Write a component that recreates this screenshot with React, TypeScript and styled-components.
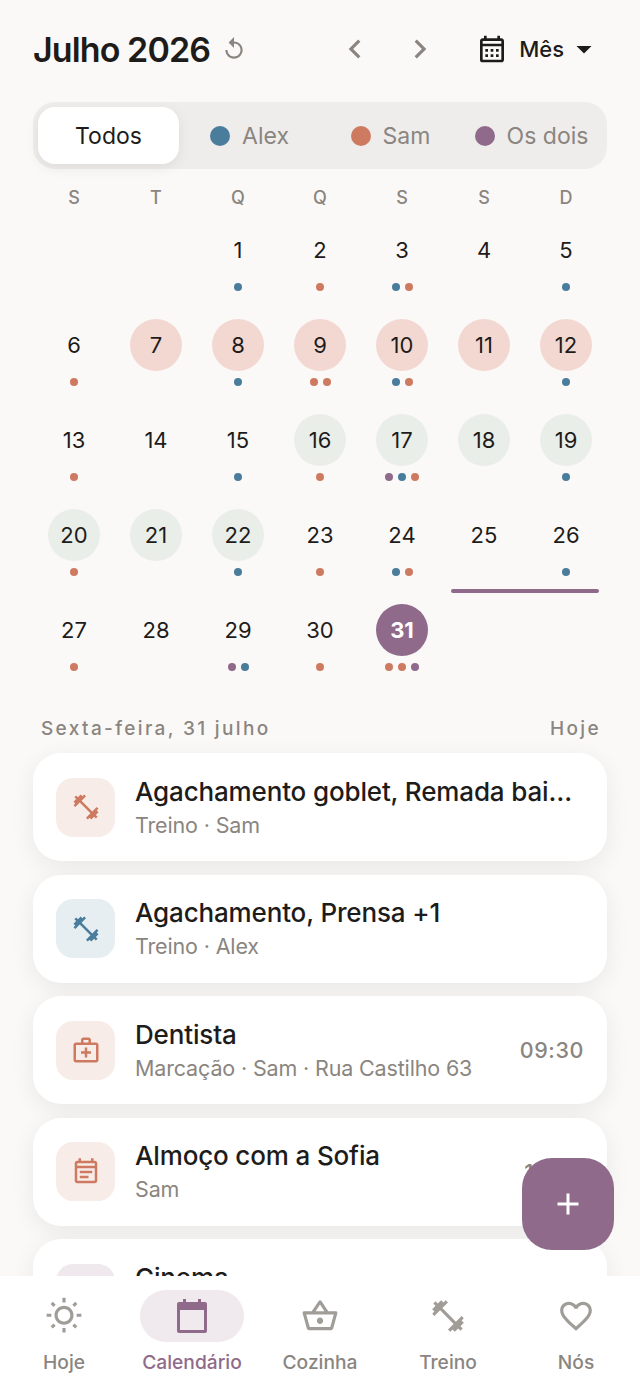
import styled, { createGlobalStyle } from "styled-components";
import type { ReactNode } from "react";
import {
  MdAdd,
  MdArrowDropDown,
  MdChevronLeft,
  MdChevronRight,
  MdFavoriteBorder,
  MdFitnessCenter,
  MdOutlineCalendarMonth,
  MdOutlineEventNote,
  MdOutlineMedicalServices,
  MdOutlineShoppingBasket,
  MdOutlineWbSunny,
  MdReplay,
} from "react-icons/md";

const ink = "#1e1c1a";
const muted = "#8a8580";
const blue = "#4a7c9c";
const coral = "#cd7a60";
const purple = "#8f6a8a";

type Who = "a" | "s" | "b";
type Tint = "none" | "pink" | "green" | "today";

const whoColor: Record<Who, string> = { a: blue, s: coral, b: purple };
const tintColor: Record<Tint, string> = {
  none: "transparent",
  pink: "#f3d8d2",
  green: "#e9eee9",
  today: purple,
};

const days: { n: number; dots: Who[]; tint?: Tint }[] = [
  { n: 1, dots: ["a"] },
  { n: 2, dots: ["s"] },
  { n: 3, dots: ["a", "s"] },
  { n: 4, dots: [] },
  { n: 5, dots: ["a"] },
  { n: 6, dots: ["s"] },
  { n: 7, dots: [], tint: "pink" },
  { n: 8, dots: ["a"], tint: "pink" },
  { n: 9, dots: ["s", "s"], tint: "pink" },
  { n: 10, dots: ["a", "s"], tint: "pink" },
  { n: 11, dots: [], tint: "pink" },
  { n: 12, dots: ["a"], tint: "pink" },
  { n: 13, dots: ["s"] },
  { n: 14, dots: [] },
  { n: 15, dots: ["a"] },
  { n: 16, dots: ["s"], tint: "green" },
  { n: 17, dots: ["b", "a", "s"], tint: "green" },
  { n: 18, dots: [], tint: "green" },
  { n: 19, dots: ["a"], tint: "green" },
  { n: 20, dots: ["s"], tint: "green" },
  { n: 21, dots: [], tint: "green" },
  { n: 22, dots: ["a"], tint: "green" },
  { n: 23, dots: ["s"] },
  { n: 24, dots: ["a", "s"] },
  { n: 25, dots: [] },
  { n: 26, dots: ["a"] },
  { n: 27, dots: ["s"] },
  { n: 28, dots: [] },
  { n: 29, dots: ["b", "a"] },
  { n: 30, dots: ["s"] },
  { n: 31, dots: ["s", "s", "b"], tint: "today" },
];

const events: { icon: ReactNode; who: Who; title: string; sub: string; time?: string }[] = [
  { icon: <MdFitnessCenter />, who: "s", title: "Agachamento goblet, Remada bai…", sub: "Treino · Sam" },
  { icon: <MdFitnessCenter />, who: "a", title: "Agachamento, Prensa +1", sub: "Treino · Alex" },
  { icon: <MdOutlineMedicalServices />, who: "s", title: "Dentista", sub: "Marcação · Sam · Rua Castilho 63", time: "09:30" },
  { icon: <MdOutlineEventNote />, who: "s", title: "Almoço com a Sofia", sub: "Sam", time: "13:00" },
  { icon: <MdOutlineEventNote />, who: "b", title: "Cinema", sub: "Os dois" },
];

export default function App() {
  return (
    <>
      <GlobalStyle />
      <Screen>
        <Header>
          <Title>Julho 2026</Title>
          <ResetIcon>
            <MdReplay />
          </ResetIcon>
          <Arrows>
            <MdChevronLeft />
            <MdChevronRight />
          </Arrows>
          <ViewPicker>
            <MdOutlineCalendarMonth />
            <span>Mês</span>
            <MdArrowDropDown />
          </ViewPicker>
        </Header>

        <Segments>
          <Segment $active>Todos</Segment>
          <Segment>
            <SegmentDot $who="a" />
            Alex
          </Segment>
          <Segment>
            <SegmentDot $who="s" />
            Sam
          </Segment>
          <Segment>
            <SegmentDot $who="b" />
            Os dois
          </Segment>
        </Segments>

        <Weekdays>
          {["S", "T", "Q", "Q", "S", "S", "D"].map((d, i) => (
            <Weekday key={i}>{d}</Weekday>
          ))}
        </Weekdays>

        <Month>
          {days.map((d) => (
            <Day key={d.n} $col={((d.n + 1) % 7) + 1} $row={Math.floor((d.n + 1) / 7) + 1}>
              <DayNumber $tint={d.tint ?? "none"}>{d.n}</DayNumber>
              <Dots>
                {d.dots.map((w, i) => (
                  <Dot key={i} $who={w} />
                ))}
              </Dots>
            </Day>
          ))}
          <RangeBar />
        </Month>

        <AgendaHead>
          <span>Sexta-feira, 31 julho</span>
          <span>Hoje</span>
        </AgendaHead>

        <Agenda>
          {events.map((e) => (
            <Card key={e.title}>
              <Tile $who={e.who}>{e.icon}</Tile>
              <CardText>
                <CardTitle>{e.title}</CardTitle>
                <CardSub>{e.sub}</CardSub>
              </CardText>
              {e.time && <CardTime>{e.time}</CardTime>}
            </Card>
          ))}
        </Agenda>

        <Fab>
          <MdAdd />
        </Fab>

        <BottomNav>
          <NavItem>
            <NavIcon>
              <MdOutlineWbSunny />
            </NavIcon>
            Hoje
          </NavItem>
          <NavItem $active>
            <NavIcon $active>
              <svg viewBox="0 0 32 36" width="32" height="36" fill="none">
                <path d="M7 1h3v4H7zM22 1h3v4h-3z" fill={purple} />
                <path
                  d="M3 4h26a2 2 0 0 1 2 2v27a2 2 0 0 1-2 2H3a2 2 0 0 1-2-2V6a2 2 0 0 1 2-2z"
                  fill={purple}
                />
                <rect x="4" y="12" width="24" height="20" fill="#f0eaee" />
              </svg>
            </NavIcon>
            Calendário
          </NavItem>
          <NavItem>
            <NavIcon>
              <MdOutlineShoppingBasket />
            </NavIcon>
            Cozinha
          </NavItem>
          <NavItem>
            <NavIcon>
              <MdFitnessCenter />
            </NavIcon>
            Treino
          </NavItem>
          <NavItem>
            <NavIcon>
              <MdFavoriteBorder />
            </NavIcon>
            Nós
          </NavItem>
        </BottomNav>
      </Screen>
    </>
  );
}

const GlobalStyle = createGlobalStyle`
  html, body {
    margin: 0;
    padding: 0;
    background: #fbf9f7;
  }
  * {
    box-sizing: border-box;
  }
`;

const Screen = styled.div`
  position: relative;
  width: 640px;
  height: 1385px;
  overflow: hidden;
  padding: 0 33px;
  background: #fbf9f7;
  color: ${ink};
  font-family: Inter, "Liberation Sans", sans-serif;
`;

const Header = styled.header`
  display: flex;
  align-items: center;
  height: 102px;
  padding-bottom: 4px;
`;

const Title = styled.h1`
  margin: 0;
  font-size: 34px;
  font-weight: 600;
  letter-spacing: -0.9px;
  white-space: nowrap;
`;

const ResetIcon = styled.span`
  display: flex;
  margin-left: 11px;
  color: ${muted};
  font-size: 26px;
`;

const Arrows = styled.div`
  display: flex;
  gap: 27px;
  margin-left: 89px;
  color: ${muted};
  font-size: 38px;
`;

const ViewPicker = styled.div`
  display: flex;
  align-items: center;
  margin-left: auto;
  margin-right: 5px;
  font-size: 22px;
  font-weight: 500;

  svg:first-child {
    font-size: 32px;
    margin-right: 11px;
  }
  svg:last-child {
    font-size: 36px;
    margin-left: 2px;
  }
`;

const Segments = styled.div`
  display: flex;
  height: 67px;
  padding: 5px;
  border-radius: 22px;
  background: #efedeb;
`;

const Segment = styled.div<{ $active?: boolean }>`
  flex: 1;
  display: flex;
  align-items: center;
  justify-content: center;
  gap: 12px;
  border-radius: 17px;
  font-size: 23px;
  white-space: nowrap;
  color: ${(p) => (p.$active ? ink : muted)};
  background: ${(p) => (p.$active ? "#fff" : "transparent")};
  box-shadow: ${(p) => (p.$active ? "0 4px 14px rgba(0, 0, 0, 0.07)" : "none")};
`;

const SegmentDot = styled.span<{ $who: Who }>`
  width: 20px;
  height: 20px;
  border-radius: 50%;
  background: ${(p) => whoColor[p.$who]};
`;

const Weekdays = styled.div`
  display: grid;
  grid-template-columns: repeat(7, 1fr);
  height: 55px;
  padding-top: 18px;
`;

const Weekday = styled.div`
  text-align: center;
  font-size: 18px;
  line-height: 22px;
  font-weight: 500;
  color: ${muted};
`;

const Month = styled.div`
  display: grid;
  grid-template-columns: repeat(7, 1fr);
  grid-auto-rows: 95px;
`;

const Day = styled.div<{ $col: number; $row: number }>`
  display: flex;
  flex-direction: column;
  align-items: center;
  grid-column: ${(p) => p.$col};
  grid-row: ${(p) => p.$row};
`;

const DayNumber = styled.div<{ $tint: Tint }>`
  display: flex;
  align-items: center;
  justify-content: center;
  width: 52px;
  height: 52px;
  border-radius: 50%;
  font-size: 22px;
  font-weight: ${(p) => (p.$tint === "today" ? 700 : 400)};
  color: ${(p) => (p.$tint === "today" ? "#fff" : ink)};
  background: ${(p) => tintColor[p.$tint]};
`;

const Dots = styled.div`
  display: flex;
  gap: 5px;
  margin-top: 7px;
`;

const Dot = styled.span<{ $who: Who }>`
  width: 8px;
  height: 8px;
  border-radius: 50%;
  background: ${(p) => whoColor[p.$who]};
`;

const RangeBar = styled.div`
  grid-column: 6 / 8;
  grid-row: 4;
  height: 4px;
  margin: 80px 8px 0;
  border-radius: 2px;
  background: ${purple};
`;

const AgendaHead = styled.div`
  display: flex;
  justify-content: space-between;
  margin-top: 18px;
  padding: 0 6px 0 8px;
  font-size: 19px;
  line-height: 24px;
  font-weight: 500;
  letter-spacing: 2.35px;
  color: ${muted};
`;

const Agenda = styled.div`
  display: flex;
  flex-direction: column;
  gap: 13.5px;
  margin-top: 12px;
`;

const Card = styled.div`
  flex: none;
  display: flex;
  align-items: center;
  height: 108px;
  padding: 0 23px;
  border-radius: 28px;
  background: #fff;
  box-shadow: 0 6px 24px rgba(0, 0, 0, 0.07);
`;

const Tile = styled.div<{ $who: Who }>`
  flex: none;
  display: flex;
  align-items: center;
  justify-content: center;
  width: 59px;
  height: 59px;
  margin-right: 20px;
  border-radius: 17px;
  font-size: 30px;
  color: ${(p) => whoColor[p.$who]};
  background: ${(p) =>
    p.$who === "a" ? "#e6eef2" : p.$who === "s" ? "#f7ece8" : "#efe9ee"};
`;

const CardText = styled.div`
  flex: 1;
  min-width: 0;
`;

const CardTitle = styled.div`
  font-size: 26px;
  line-height: 34px;
  font-weight: 450;
  letter-spacing: -0.15px;
  white-space: nowrap;
`;

const CardSub = styled.div`
  margin-top: 1px;
  font-size: 21.5px;
  line-height: 30px;
  letter-spacing: -0.15px;
  color: ${muted};
  white-space: nowrap;
`;

const CardTime = styled.div`
  flex: none;
  margin-left: 12px;
  font-size: 21.5px;
  font-weight: 500;
  letter-spacing: 0.6px;
  color: ${muted};
`;

const Fab = styled.button`
  position: absolute;
  left: 522px;
  top: 1158px;
  display: flex;
  align-items: center;
  justify-content: center;
  width: 92px;
  height: 92px;
  padding: 0;
  border: 0;
  border-radius: 30px;
  font-size: 36px;
  color: #fff;
  background: ${purple};
`;

const BottomNav = styled.nav`
  position: absolute;
  left: 0;
  right: 0;
  bottom: 0;
  display: grid;
  grid-template-columns: repeat(5, 1fr);
  height: 109px;
  padding-top: 14px;
  background: #fff;
`;

const NavItem = styled.div<{ $active?: boolean }>`
  display: flex;
  flex-direction: column;
  align-items: center;
  gap: 8px;
  font-size: 19.2px;
  line-height: 24px;
  font-weight: 500;
  color: ${(p) => (p.$active ? purple : muted)};
`;

const NavIcon = styled.div<{ $active?: boolean }>`
  display: flex;
  align-items: center;
  justify-content: center;
  width: 104px;
  height: 52px;
  border-radius: 26px;
  font-size: 38px;
  color: #a09c98;
  background: ${(p) => (p.$active ? "#f0eaee" : "transparent")};
`;
